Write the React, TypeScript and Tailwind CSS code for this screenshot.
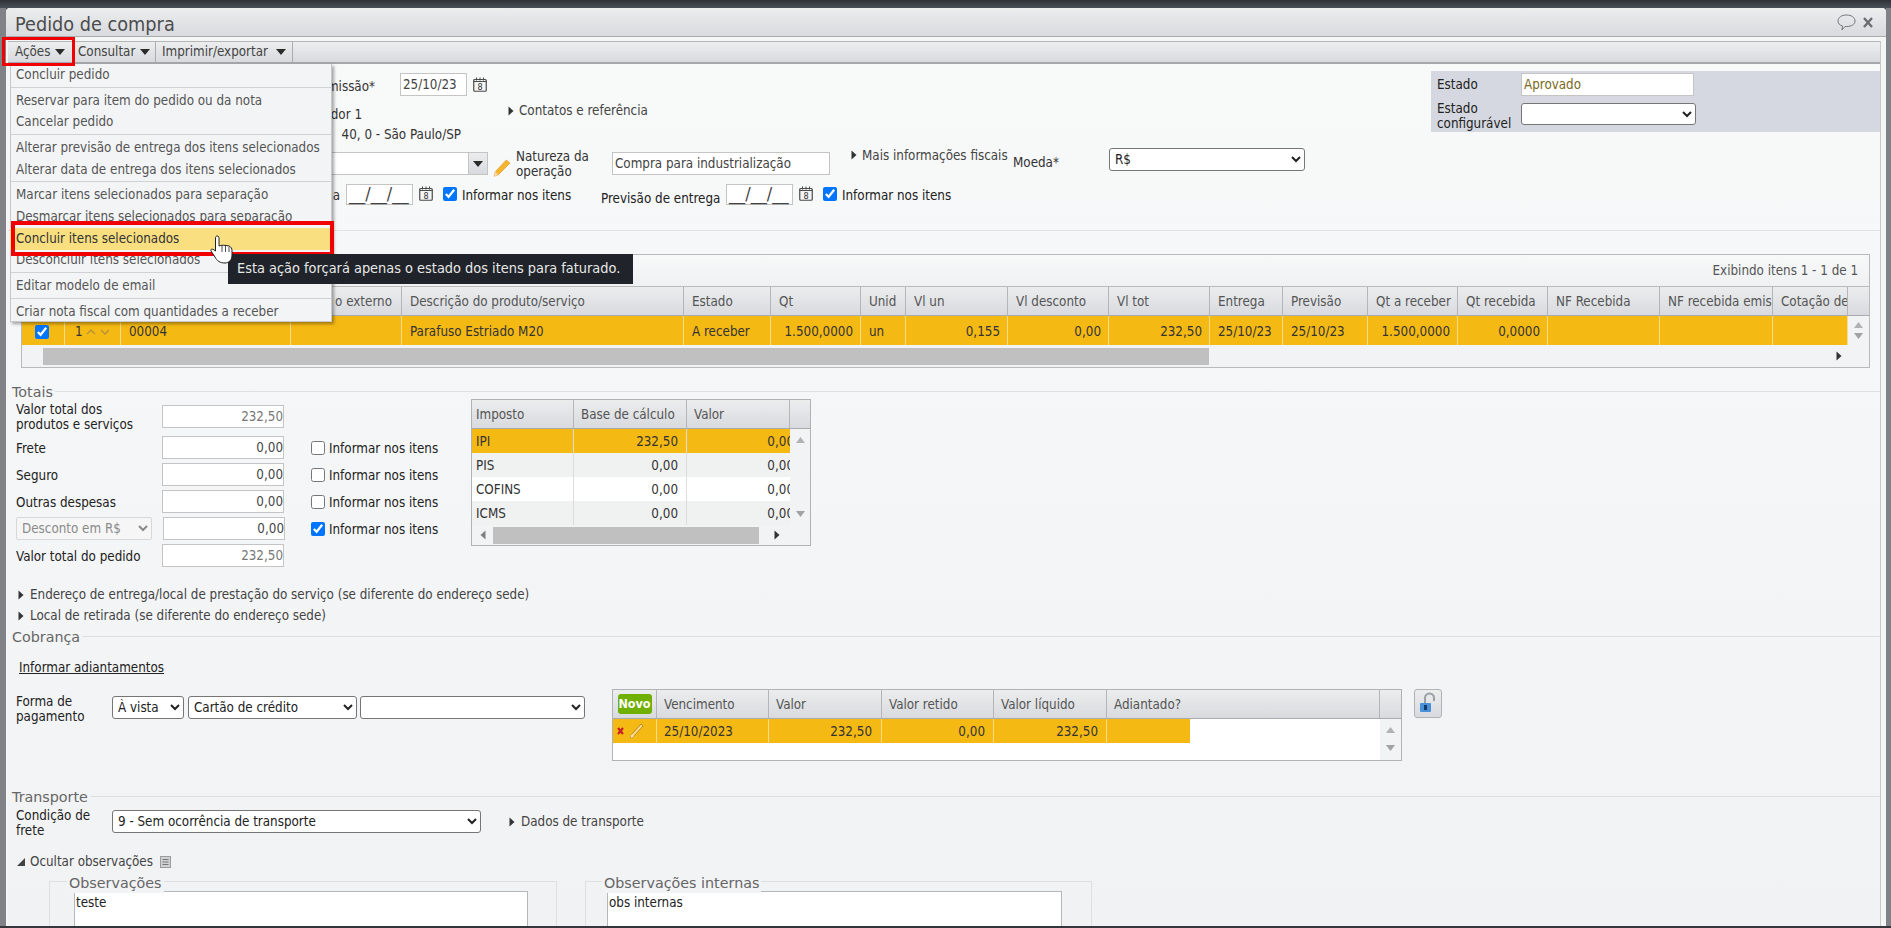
import React from "react";

const font = "font-['DejaVu_Sans'] [font-stretch:condensed]";

function Caret({ cls = "" }: { cls?: string }) {
  return (
    <svg width="6" height="10" viewBox="0 0 6 10" className={cls}>
      <path d="M0.5 0.5 L5.5 5 L0.5 9.5 Z" fill="#333" />
    </svg>
  );
}
function DownArrow({ cls = "" }: { cls?: string }) {
  return (
    <svg width="10" height="6" viewBox="0 0 10 6" className={cls}>
      <path d="M0 0 H10 L5 6 Z" fill="#2b2b2b" />
    </svg>
  );
}
function Cal({ cls = "" }: { cls?: string }) {
  return (
    <svg width="14" height="15" viewBox="0 0 14 15" className={cls}>
      <rect x="0.75" y="2.5" width="12.5" height="11.75" rx="1" fill="#f5f5f5" stroke="#4a4a4a" strokeWidth="1.2" />
      <path d="M0.5 4.5H13.5" stroke="#4a4a4a" />
      <path d="M3.5 0.5V3.5M7 0.5V3.5M10.5 0.5V3.5" stroke="#4a4a4a" />
      <text x="7" y="13" fontSize="9" textAnchor="middle" fill="#333" fontFamily="DejaVu Sans">8</text>
    </svg>
  );
}
function Pencil() {
  return (
    <svg width="18" height="18" viewBox="0 0 17 17">
      <path d="M12.5 1 L16 3.8 L5 15 L1 16.2 L2.2 12 Z" fill="#f7b52a" stroke="#e3993a" strokeWidth="0.7" />
      <path d="M2.2 12 L5 15 L1 16.2 Z" fill="#f3dcb4" />
    </svg>
  );
}
function ThinPencil() {
  return (
    <svg width="15" height="16" viewBox="0 0 15 16">
      <path d="M12 1 L14 3 L4.5 13.5 L1.5 14.8 L2.5 11.5 Z" fill="#f9d98a" stroke="#b0761c" strokeWidth="0.8" />
      <path d="M2.5 11.5 L4.5 13.5 L1.5 14.8 Z" fill="#fff3d8" />
    </svg>
  );
}
function Inp({ cls, children, right }: { cls: string; children?: React.ReactNode; right?: boolean }) {
  return (
    <div className={`${cls} h-[23px] border border-[#c4c4c4] bg-white px-[2px] leading-[22px] text-[#444] whitespace-nowrap overflow-hidden ${right ? "text-right pr-0" : ""}`}>
      {children}
    </div>
  );
}
function Mask() {
  return (
    <div className="w-[67px] h-[21px] border border-[#c4c4c4] bg-white px-[2px] text-[18px] leading-[17px] text-[#444] whitespace-nowrap">__/__/__</div>
  );
}
function Sel({ cls, value }: { cls: string; value: string }) {
  return (
    <select defaultValue={value} className={`${cls} h-[23px] bg-white border border-[#767676] rounded-[3px] text-[13.3px] text-[#222] pl-[1px] ${font}`}>
      <option value={value}>{value}</option>
    </select>
  );
}
function Check({ on, cls = "" }: { on?: boolean; cls?: string }) {
  return <input type="checkbox" defaultChecked={on} className={`w-[14px] h-[14px] m-0 ${cls}`} />;
}

const menu: (string | null)[] = [
  "Concluir pedido",
  null,
  "Reservar para item do pedido ou da nota",
  "Cancelar pedido",
  null,
  "Alterar previsão de entrega dos itens selecionados",
  "Alterar data de entrega dos itens selecionados",
  null,
  "Marcar itens selecionados para separação",
  "Desmarcar itens selecionados para separação",
  "Concluir itens selecionados",
  "Desconcluir itens selecionados",
  null,
  "Editar modelo de email",
  null,
  "Criar nota fiscal com quantidades a receber",
];

const mainCols: [string, string, string][] = [
  ["w-[43px]", "", ""],
  ["w-[56px]", "", ""],
  ["w-[170px]", "", ""],
  ["w-[111px]", "", ""],
  ["w-[282px]", "Descrição do produto/serviço", "Parafuso Estriado M20"],
  ["w-[87px]", "Estado", "A receber"],
  ["w-[90px]", "Qt", "1.500,0000"],
  ["w-[45px]", "Unid", "un"],
  ["w-[102px]", "Vl un", "0,155"],
  ["w-[101px]", "Vl desconto", "0,00"],
  ["w-[101px]", "Vl tot", "232,50"],
  ["w-[73px]", "Entrega", "25/10/23"],
  ["w-[85px]", "Previsão", "25/10/23"],
  ["w-[90px]", "Qt a receber", "1.500,0000"],
  ["w-[90px]", "Qt recebida", "0,0000"],
  ["w-[112px]", "NF Recebida", ""],
  ["w-[113px]", "NF recebida emis", ""],
  ["w-[75px]", "Cotação de", ""],
];
const rightAligned = new Set(["1.500,0000", "0,155", "0,00", "232,50", "0,0000"]);

const headBg = "bg-gradient-to-b from-[#eceded] to-[#d8dadf]";

function Section({ title, lineCls }: { title: string; lineCls?: string }) {
  return (
    <div className={`flex items-center h-[20px] shrink-0 ${lineCls ?? ""}`}>
      <span className="ml-[4px] pr-[2px] pt-[3px] text-[14.3px] [font-stretch:normal] text-[#666]">{title}</span>
      <div className="flex-1 h-px bg-[#dedfe0]" />
    </div>
  );
}

function UpDown({ gap }: { gap: string }) {
  return (
    <div className={`flex-1 flex flex-col items-center justify-center ${gap} bg-[#f2f3f4]`}>
      <svg width="9" height="6" viewBox="0 0 9 6"><path d="M0 6 H9 L4.5 0 Z" fill="#b0b2b4" /></svg>
      <svg width="9" height="6" viewBox="0 0 9 6"><path d="M0 0 H9 L4.5 6 Z" fill="#a0a2a4" /></svg>
    </div>
  );
}

export default function App() {
  return (
    <div className={`w-[1891px] h-[928px] overflow-hidden relative flex flex-col bg-[#3d4249] text-[13.3px] text-[#333] ${font}`}>
      <div className="h-[8px] shrink-0 bg-gradient-to-b from-[#2f3237] to-[#4a5058]" />
      <div className="flex flex-1 min-h-0">
        <div className="w-[6px] shrink-0 bg-[#7f8286]" />
        <div className="flex-1 min-w-0 flex flex-col bg-[#f4f5f5] rounded-t-[4px] overflow-hidden">
          <div className={`h-[29px] shrink-0 flex items-center border-b border-[#a9abad] ${headBg}`}>
            <span className="ml-[9px] pt-[5px] text-[19.7px] text-[#4c4c4c]">Pedido de compra</span>
            <div className="ml-auto mr-[13px] flex items-center gap-[7px]">
              <svg width="19" height="17" viewBox="0 0 19 17">
                <path d="M9.5 1 C14.5 1 18 3.5 18 7 C18 10.5 14.5 12.5 9.5 12.5 L8 12.5 L5 16 L5.5 12 C2.5 11 1 9.5 1 7 C1 3.5 4.5 1 9.5 1 Z" fill="none" stroke="#6f7479" strokeWidth="1" />
              </svg>
              <svg width="10" height="11" viewBox="0 0 10 11">
                <path d="M1 1 L9 10 M9 1 L1 10" stroke="#6a6d70" strokeWidth="2.4" />
              </svg>
            </div>
          </div>
          <div className="h-[4px] shrink-0" />
          <div className="flex-1 min-h-0 flex flex-col ml-[2px] mr-[5px] border-r border-[#c8c8c8] bg-gradient-to-b from-[#f8f9f9] to-[#f1f2f4]">
            {/* toolbar */}
            <div className={`h-[23px] shrink-0 flex items-center border-t border-b-[2px] border-t-[#b4b6b8] border-b-[#a5a7aa] ${headBg} text-[#444]`}>
              <div className="w-[70px] h-full flex items-center pl-[7px]">
                <span>Ações</span>
                <DownArrow cls="ml-[5px]" />
              </div>
              <div className="w-[78px] h-full flex items-center border-r border-[#a9abad]">
                <span>Consultar</span>
                <DownArrow cls="ml-[5px]" />
              </div>
              <div className="w-[137px] h-full flex items-center pl-[6px] border-r border-[#a9abad]">
                <span>Imprimir/exportar</span>
                <DownArrow cls="ml-[8px]" />
              </div>
            </div>

            {/* top form */}
            <div className="h-[167px] shrink-0 flex border-b border-[#e0e1e2]">
              <div className="w-[1423px] shrink-0 flex flex-col">
                <div className="mt-[9px] h-[23px] flex items-center">
                  <div className="w-[367px] text-right pt-[5px] whitespace-nowrap">missão*</div>
                  <Inp cls="ml-[25px] w-[67px]">25/10/23</Inp>
                  <Cal cls="ml-[6px]" />
                </div>
                <div className="h-[26px] flex">
                  <div className="w-[354px] text-right pt-[9px] whitespace-nowrap">dor 1</div>
                  <Caret cls="ml-[146px] mt-[10px]" />
                  <span className="ml-[5px] pt-[5px] text-[#444]">Contatos e referência</span>
                </div>
                <div className="h-[26px] flex">
                  <div className="w-[453px] text-right pt-[3px] whitespace-nowrap">40, 0 - São Paulo/SP</div>
                </div>
                <div className="h-[30px] flex">
                  <div className="ml-[322px] mt-[4px] w-[158px] h-[23px] flex border border-[#c4c4c4] bg-white">
                    <div className="flex-1" />
                    <div className={`w-[19px] flex items-center justify-center border-l border-[#c4c4c4] ${headBg}`}>
                      <DownArrow />
                    </div>
                  </div>
                  <div className="ml-[5px] mt-[11px] w-[17px]"><Pencil /></div>
                  <div className="ml-[6px] mt-[1px] w-[90px] leading-[15px]">Natureza da<br />operação</div>
                  <Inp cls="ml-[6px] mt-[4px] w-[218px]">Compra para industrialização</Inp>
                  <Caret cls="ml-[21px] mt-[2px]" />
                  <span className="ml-[5px] text-[#444] leading-[15px] w-[151px] whitespace-nowrap">Mais informações fiscais</span>
                  <span className="mt-[7px] w-[96px] leading-[15px]">Moeda*</span>
                  <Sel cls="w-[196px]" value="R$" />
                </div>
                <div className="flex">
                  <div className="w-[332px] text-right pt-[8px] whitespace-nowrap">a</div>
                  <div className="ml-[6px] mt-[6px]"><Mask /></div>
                  <Cal cls="ml-[6px] mt-[8px]" />
                  <Check on cls="ml-[10px] mt-[9px]" />
                  <span className="ml-[5px] mt-[8px] w-[139px] text-[#222] whitespace-nowrap">Informar nos itens</span>
                  <span className="mt-[11px] w-[125px] text-[#222] whitespace-nowrap">Previsão de entrega</span>
                  <div className="mt-[6px]"><Mask /></div>
                  <Cal cls="ml-[6px] mt-[8px]" />
                  <Check on cls="ml-[10px] mt-[9px]" />
                  <span className="ml-[5px] mt-[8px] text-[#222] whitespace-nowrap">Informar nos itens</span>
                </div>
              </div>
              <div className="mt-[7px] w-[450px] h-[61px] bg-[#d5d8e0] flex text-[#222]">
                <div className="w-[90px] pl-[6px]">
                  <div className="mt-[6px] leading-[16px]">Estado</div>
                  <div className="mt-[8px] leading-[15px]">Estado<br />configurável</div>
                </div>
                <div className="flex flex-col">
                  <Inp cls="mt-[2px] w-[173px]"><span className="text-[#7a6a20]">Aprovado</span></Inp>
                  <Sel cls="mt-[7px] w-[175px] !h-[22px]" value="" />
                </div>
              </div>
            </div>

            {/* main grid */}
            <div className="mt-[23px] ml-[13px] w-[1849px] h-[114px] shrink-0 border border-[#b8babc] flex flex-col">
              <div className="h-[32px] shrink-0 flex items-center justify-end pr-[11px] bg-gradient-to-b from-[#f7f8f8] to-[#f0f1f3] border-b border-[#b8babc] text-[#555]">
                Exibindo itens 1 - 1 de 1
              </div>
              <div className={`h-[29px] shrink-0 flex border-b border-[#a9abad] ${headBg}`}>
                {mainCols.map(([w, h], i) => (
                  <div key={i} className={`${w} shrink-0 flex items-center pl-[8px] pt-[2px] overflow-hidden whitespace-nowrap border-r border-[#b3b5b7] text-[#555]`}>
                    {i === 3 ? <span className="ml-auto pr-[9px]">o externo</span> : h}
                  </div>
                ))}
                <div className="flex-1" />
              </div>
              <div className="h-[29px] shrink-0 flex bg-white">
                {mainCols.map(([w, , v], i) => (
                  <div key={i} className={`${w} shrink-0 flex items-center pt-[2px] overflow-hidden whitespace-nowrap border-r border-[#f6dc8c] bg-[#f5b914] text-[#333] ${rightAligned.has(v) ? "justify-end pr-[7px]" : "pl-[8px]"}`}>
                    {i === 0 && <Check on cls="ml-[5px]" />}
                    {i === 1 && (
                      <span className="flex items-center gap-[3px] pl-[2px]">
                        1
                        <svg width="24" height="8" viewBox="0 0 24 8"><path d="M1 6 L5 2 L9 6 M15 2 L19 6 L23 2" fill="none" stroke="#b9913a" strokeWidth="1.4" /></svg>
                      </span>
                    )}
                    {i === 2 && "00004"}
                    {v}
                  </div>
                ))}
                <UpDown gap="gap-[5px]" />
              </div>
              <div className="flex-1 flex items-center bg-[#f2f3f4]">
                <div className="ml-[21px] w-[1166px] h-[17px] bg-[#c0c0c0]" />
                <Caret cls="ml-[627px]" />
              </div>
            </div>

            {/* totais */}
            <Section title="Totais" lineCls="mt-[13px]" />
            <div className="h-[166px] shrink-0 flex">
              <div className="w-[303px] shrink-0 flex flex-col">
                <div className="flex h-[35px] items-start">
                  <div className="w-[154px] pl-[8px] leading-[15px] pt-[1px] text-[#222] whitespace-nowrap">Valor total dos<br />produtos e serviços</div>
                  <Inp cls="mt-[4px] w-[122px]" right><span className="text-[#777]">232,50</span></Inp>
                </div>
                <div className="flex h-[27px]">
                  <div className="w-[154px] h-[23px] pl-[8px] pt-[2px] text-[#222] flex items-center">Frete</div>
                  <Inp cls="w-[122px]" right>0,00</Inp>
                </div>
                <div className="flex h-[27px]">
                  <div className="w-[154px] h-[23px] pl-[8px] pt-[2px] text-[#222] flex items-center">Seguro</div>
                  <Inp cls="w-[122px]" right>0,00</Inp>
                </div>
                <div className="flex h-[27px]">
                  <div className="w-[154px] h-[23px] pl-[8px] pt-[2px] text-[#222] flex items-center">Outras despesas</div>
                  <Inp cls="w-[122px]" right>0,00</Inp>
                </div>
                <div className="flex h-[27px]">
                  <div className="w-[155px] pl-[8px]">
                    <select defaultValue="d" disabled className={`w-[136px] h-[23px] bg-[#f6f6f6] border border-[#d8d8d8] rounded-[2px] text-[13.3px] text-[#8a8a8a] pl-[1px] ${font}`}>
                      <option value="d">Desconto em R$</option>
                    </select>
                  </div>
                  <Inp cls="w-[122px]" right>0,00</Inp>
                </div>
                <div className="flex h-[23px]">
                  <div className="w-[154px] h-[23px] pl-[8px] pt-[2px] text-[#222] flex items-center whitespace-nowrap">Valor total do pedido</div>
                  <Inp cls="w-[122px]" right><span className="text-[#777]">232,50</span></Inp>
                </div>
              </div>
              <div className="w-[160px] shrink-0 flex flex-col pt-[33px]">
                {[false, false, false, true].map((on, i) => (
                  <div key={i} className="h-[27px] flex items-center text-[#222]">
                    <Check on={on} />
                    <span className="ml-[4px] pt-[2px] whitespace-nowrap">Informar nos itens</span>
                  </div>
                ))}
              </div>
              <div className="mt-[-2px] w-[340px] h-[147px] shrink-0 border border-[#b0b2b4] flex flex-col">
                <div className={`h-[29px] shrink-0 flex border-b border-[#a9abad] text-[#555] ${headBg}`}>
                  <div className="w-[102px] flex items-center pl-[4px] pt-[2px] border-r border-[#b3b5b7]">Imposto</div>
                  <div className="w-[113px] flex items-center pl-[7px] pt-[2px] border-r border-[#b3b5b7]">Base de cálculo</div>
                  <div className="w-[103px] flex items-center pl-[7px] pt-[2px] border-r border-[#b3b5b7]">Valor</div>
                </div>
                <div className="flex h-[96px] shrink-0">
                  <div className="w-[318px] flex flex-col">
                    {[
                      ["IPI", "232,50", "bg-[#f5b914]"],
                      ["PIS", "0,00", "bg-[#f0f1f1]"],
                      ["COFINS", "0,00", "bg-white"],
                      ["ICMS", "0,00", "bg-[#f0f1f1]"],
                    ].map(([n, v, bg]) => (
                      <div key={n} className={`h-[24px] flex items-center ${bg} text-[#333]`}>
                        <div className="w-[102px] h-full flex items-center pl-[4px] pt-[2px] border-r border-[#dcdcdc]">{n}</div>
                        <div className="w-[113px] h-full flex items-center justify-end pr-[8px] pt-[2px] border-r border-[#dcdcdc]">{v}</div>
                        <div className="w-[103px] h-full flex items-center justify-end pt-[2px] overflow-hidden whitespace-nowrap">
                          <span className="mr-[-4px]">0,00</span>
                        </div>
                      </div>
                    ))}
                  </div>
                  <div className="flex-1 flex flex-col items-center justify-between py-[8px] bg-[#f2f3f4]">
                    <svg width="9" height="6" viewBox="0 0 9 6"><path d="M0 6 H9 L4.5 0 Z" fill="#b0b2b4" /></svg>
                    <svg width="9" height="6" viewBox="0 0 9 6"><path d="M0 0 H9 L4.5 6 Z" fill="#a0a2a4" /></svg>
                  </div>
                </div>
                <div className="flex-1 flex items-center bg-[#f2f3f4]">
                  <Caret cls="ml-[8px] rotate-180 opacity-60" />
                  <div className="ml-[7px] w-[266px] h-[17px] bg-[#c0c0c0]" />
                  <Caret cls="ml-[15px]" />
                </div>
              </div>
            </div>

            <div className="mt-[17px] h-[22px] shrink-0 flex items-center text-[#444]">
              <Caret cls="ml-[10px]" />
              <span className="ml-[6px]">Endereço de entrega/local de prestação do serviço (se diferente do endereço sede)</span>
            </div>
            <div className="h-[20px] shrink-0 flex items-center text-[#444]">
              <Caret cls="ml-[10px]" />
              <span className="ml-[6px]">Local de retirada (se diferente do endereço sede)</span>
            </div>

            <Section title="Cobrança" />
            <div className="h-[140px] shrink-0 flex flex-col">
              <div className="mt-[12px] ml-[11px] underline text-[#222]">Informar adiantamentos</div>
              <div className="flex mt-[11px]">
                <div className="w-[96px] ml-[8px] mt-[5px] leading-[15px] text-[#222]">Forma de<br />pagamento</div>
                <Sel cls="mt-[7px] w-[72px]" value="À vista" />
                <Sel cls="mt-[7px] ml-[4px] w-[169px]" value="Cartão de crédito" />
                <Sel cls="mt-[7px] ml-[3px] w-[225px]" value=" " />
                <div className="ml-[27px] w-[790px] h-[72px] border border-[#b0b2b4] flex flex-col">
                  <div className={`h-[29px] shrink-0 flex border-b border-[#a9abad] text-[#555] ${headBg}`}>
                    <div className="w-[44px] flex items-center justify-center border-r border-[#b3b5b7]">
                      <span className="w-[34px] h-[20px] rounded-[3px] bg-[#6fb000] text-white font-bold text-[12.5px] text-center leading-[20px]">Novo</span>
                    </div>
                    <div className="w-[112px] flex items-center pl-[7px] pt-[2px] border-r border-[#b3b5b7]">Vencimento</div>
                    <div className="w-[113px] flex items-center pl-[7px] pt-[2px] border-r border-[#b3b5b7]">Valor</div>
                    <div className="w-[112px] flex items-center pl-[7px] pt-[2px] border-r border-[#b3b5b7]">Valor retido</div>
                    <div className="w-[113px] flex items-center pl-[7px] pt-[2px] border-r border-[#b3b5b7]">Valor líquido</div>
                    <div className="w-[273px] flex items-center pl-[7px] pt-[2px] border-r border-[#b3b5b7]">Adiantado?</div>
                  </div>
                  <div className="flex-1 flex bg-white">
                    <div className="w-[767px]">
                      <div className="w-[577px] h-[24px] flex bg-[#f5b914] text-[#333]">
                        <div className="w-[44px] flex items-center pl-[4px] gap-[5px] border-r border-[#f6dc8c]">
                          <svg width="7" height="8" viewBox="0 0 7 8"><path d="M1 1 L6 7 M6 1 L1 7" stroke="#c8202a" strokeWidth="2.2" /></svg>
                          <ThinPencil />
                        </div>
                        <div className="w-[112px] flex items-center pl-[7px] pt-[2px] border-r border-[#f6dc8c]">25/10/2023</div>
                        <div className="w-[113px] flex items-center justify-end pr-[9px] pt-[2px] border-r border-[#f6dc8c]">232,50</div>
                        <div className="w-[112px] flex items-center justify-end pr-[8px] pt-[2px] border-r border-[#f6dc8c]">0,00</div>
                        <div className="w-[113px] flex items-center justify-end pr-[8px] pt-[2px] border-r border-[#f6dc8c]">232,50</div>
                      </div>
                    </div>
                    <UpDown gap="gap-[12px]" />
                  </div>
                </div>
                <div className={`ml-[12px] w-[28px] h-[29px] rounded-[3px] border border-[#b0b2b4] flex items-center justify-center ${headBg}`}>
                  <svg width="18" height="22" viewBox="0 0 18 22">
                    <path d="M6 11 V6 A4.5 4.5 0 0 1 15 6 V9" fill="none" stroke="#9aa0a6" strokeWidth="2" />
                    <rect x="1" y="11" width="11" height="9" rx="1" fill="#4a90d9" />
                    <rect x="5" y="13" width="3" height="5" fill="#123a6a" />
                  </svg>
                </div>
              </div>
            </div>

            <Section title="Transporte" />
            <div className="flex h-[33px] shrink-0">
              <div className="w-[96px] ml-[8px] mt-[2px] leading-[15px] text-[#222]">Condição de<br />frete</div>
              <Sel cls="mt-[4px] w-[369px]" value="9 - Sem ocorrência de transporte" />
              <Caret cls="ml-[28px] mt-[11px]" />
              <span className="ml-[6px] mt-[6px] text-[#444]">Dados de transporte</span>
            </div>
            <div className="h-[24px] mt-[11px] shrink-0 flex items-center text-[#444]">
              <svg width="8" height="8" viewBox="0 0 8 8" className="ml-[9px]"><path d="M8 0 V8 H0 Z" fill="#444" /></svg>
              <span className="ml-[5px]">Ocultar observações</span>
              <svg width="11" height="12" viewBox="0 0 11 12" className="ml-[7px]">
                <rect x="0.5" y="0.5" width="10" height="11" fill="#cfd1d3" stroke="#9a9c9e" />
                <path d="M2.5 3.5H8.5M2.5 6H8.5M2.5 8.5H8.5" stroke="#777" />
              </svg>
            </div>
            <div className="flex mt-[7px] flex-1 min-h-0">
              <div className="ml-[41px] w-[508px] h-[60px] border border-[#dedfe0] relative">
                <span className="absolute left-[17px] -top-[9px] px-[2px] text-[14.3px] leading-[20px] [font-stretch:normal] text-[#666] bg-[#f2f3f5]">Observações</span>
                <div className="ml-[24px] mt-[9px] w-[454px] h-[60px] border border-[#b5b7b9] bg-white pl-[1px] pt-[1px] text-[#222]">teste</div>
              </div>
              <div className="ml-[28px] w-[507px] h-[60px] border border-[#dedfe0] relative">
                <span className="absolute left-[16px] -top-[9px] px-[2px] text-[14.3px] leading-[20px] [font-stretch:normal] text-[#666] bg-[#f2f3f5]">Observações internas</span>
                <div className="ml-[21px] mt-[9px] w-[455px] h-[60px] border border-[#b5b7b9] bg-white pl-[1px] pt-[1px] text-[#222]">obs internas</div>
              </div>
            </div>
          </div>
        </div>
        <div className="w-[5px] shrink-0 bg-[#7f8286]" />
      </div>
      <div className="h-[2px] shrink-0 bg-[#33363b]" />

      {/* Red highlight on the Ações button */}
      <div className="absolute left-[2px] top-[37px] w-[73px] h-[29px] border-[3px] border-[#f00000] pointer-events-none z-30" />

      {/* Dropdown menu */}
      <div className="absolute left-[10px] top-[64px] w-[322px] h-[258px] bg-[#f3f4f5] border-x border-b border-[#c8c8c8] shadow-[2px_2px_3px_rgba(0,0,0,0.35)] z-20 flex flex-col text-[#555] whitespace-nowrap">
        {menu.map((m, i) =>
          m === null ? (
            <div key={i} className="h-px mt-[1px] mb-[2px] bg-[#d0d1d3] shrink-0" />
          ) : m === "Concluir itens selecionados" ? (
            <div key={i} className="h-[21.7px] shrink-0 flex items-center pl-[5px] bg-[#f9df80] text-[#333] -mx-px">
              <span className="pl-px">{m}</span>
            </div>
          ) : (
            <div key={i} className="h-[21.7px] shrink-0 flex items-center pl-[5px]">{m}</div>
          )
        )}
      </div>
      <div className="absolute left-[11px] top-[221px] w-[323px] h-[35px] border-[4px] border-[#f00000] pointer-events-none z-30" />

      {/* Tooltip */}
      <div className="absolute left-[228px] top-[254px] w-[405px] h-[30px] bg-[#20242a] text-[#e8e8e8] text-[14.4px] flex items-center pl-[9px] z-40 whitespace-nowrap">
        Esta ação forçará apenas o estado dos itens para faturado.
      </div>

      {/* Hand cursor */}
      <svg width="24" height="30" viewBox="0 0 24 30" className="absolute left-[209px] top-[235px] z-50">
        <path d="M8 1 C9.5 1 10 2 10 3 V11 C12 10 16 10 20 11 C22 12 23 13 23 16 V20 C23 25 20 28 16 28 C11 28 8 26 6 22 L2 16 C1.5 14 3 13 6.5 16 V3 C6.5 2 7 1 8 1 Z" fill="#fff" stroke="#222" strokeWidth="1" />
        <path d="M13 11 V17 M16.5 11 V17 M20 12 V17" stroke="#222" strokeWidth="0.8" />
      </svg>
    </div>
  );
}
